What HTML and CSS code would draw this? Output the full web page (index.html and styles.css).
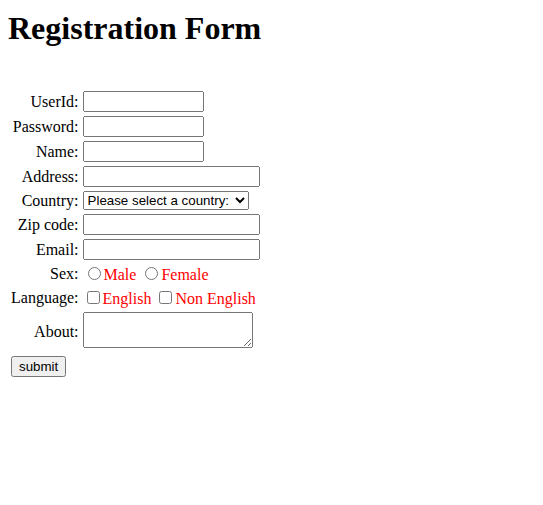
FILE: index.html
```html
<!DOCTYPE html>
<html>
<head>
<meta charset="utf-8">
<link rel="stylesheet" href="styles.css">
</head>
<body>
<h1 class="title">Registration Form</h1>
<form class="form">
<table class="grid">
<tr><td class="lbl">UserId:</td><td><input class="short" type="text"></td></tr>
<tr><td class="lbl">Password:</td><td><input class="short" type="password"></td></tr>
<tr><td class="lbl">Name:</td><td><input class="short" type="text"></td></tr>
<tr><td class="lbl">Address:</td><td><input class="long" type="text"></td></tr>
<tr><td class="lbl">Country:</td><td><select class="sel"><option>Please select a country:</option></select></td></tr>
<tr><td class="lbl">Zip code:</td><td><input class="long" type="text"></td></tr>
<tr><td class="lbl">Email:</td><td><input class="long" type="text"></td></tr>
<tr><td class="lbl">Sex:</td><td><input class="radio" type="radio" name="sex"><span class="opt">Male</span> <input class="radio" type="radio" name="sex"><span class="opt">Female</span></td></tr>
<tr><td class="lbl">Language:</td><td><input class="check" type="checkbox"><span class="opt">English</span> <input class="check" type="checkbox"><span class="opt">Non English</span></td></tr>
<tr><td class="lbl">About:</td><td><textarea class="about"></textarea></td></tr>
<tr><td><button class="btn" type="button">submit</button></td></tr>
</table>
</form>
</body>
</html>
```
FILE: styles.css
```css
body {
  margin: 0;
  padding: 8px;
  font-family: "Liberation Serif", "Times New Roman", serif;
  font-size: 16px;
  color: #000;
  background: #fff;
}
.title {
  font-size: 32px;
  font-weight: bold;
  margin: 2px 0 21px;
}
.form {
  margin: 0;
  padding-top: 20px;
}
.grid {
  border-spacing: 2px;
}
.grid td {
  padding: 1px;
}
.lbl {
  text-align: right;
}
input[type=text], input[type=password], textarea, select {
  font-family: "Liberation Sans", Arial, sans-serif;
  font-size: 13.33px;
}
.short {
  width: 121px;
  height: 21px;
  box-sizing: border-box;
  margin: 0;
}
.long {
  width: 177px;
  height: 21px;
  box-sizing: border-box;
  margin: 0;
}
.sel {
  margin: 0;
  width: 166px;
  height: 19px;
  box-sizing: border-box;
}
.radio {
  margin: 3px 3px 0 5px;
}
.check {
  margin: 3px 3px 3px 4px;
}
.opt {
  color: #f00;
}
.about {
  width: 170px;
  height: 36px;
  box-sizing: border-box;
  margin: 0;
}
.btn {
  font-family: "Liberation Sans", Arial, sans-serif;
  font-size: 13.33px;
  margin: 0;
}
```
